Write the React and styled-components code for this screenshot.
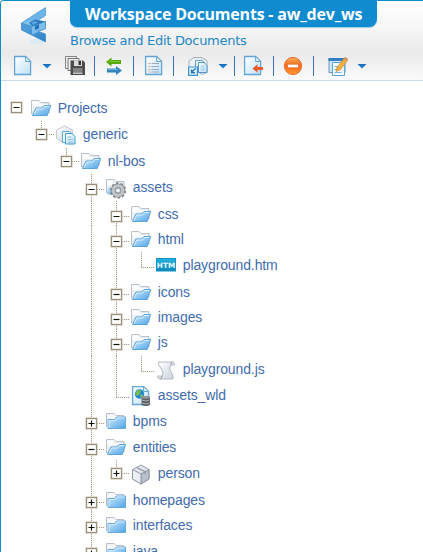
import React from 'react';
import styled, { createGlobalStyle } from 'styled-components';

const GlobalStyle = createGlobalStyle`
  * { box-sizing: border-box; }
  body { margin: 0; background: #fff; overflow: hidden; }
`;

const Window = styled.div`
  width: 423px;
  height: 552px;
  overflow: hidden;
  background: #fff;
  border-left: 1px solid #108bd0;
  border-top: 1px solid #108bd0;
  border-top-left-radius: 4px;
`;

const Header = styled.header`
  height: 80px;
  display: flex;
  flex-direction: column;
  border-bottom: 1px solid #cdd9ea;
  background: linear-gradient(#fff 0, #f8f8f8 22px, #eaeaea 51px, #ececec 56px, #fbfbfb 79px);
`;

const Banner = styled.div`
  display: flex;
  height: 53px;
`;

const LogoSlot = styled.div`
  width: 69px;
  padding: 4px 0 0 18px;
`;

const Title = styled.h1`
  margin: -1px 0 0;
  width: 307px;
  height: 27px;
  padding: 0 0 0 15px;
  border-radius: 0 0 8px 7px;
  background: #108bd0;
  box-shadow: 0 1px 1px #9cc9e6;
  color: #fff;
  font: bold 16px/28px 'Open Sans', sans-serif;
  letter-spacing: -0.2px;
  white-space: nowrap;
`;

const Subtitle = styled.div`
  color: #1b87c6;
  font: 13px/20px 'DejaVu Sans', sans-serif;
  letter-spacing: -0.28px;
  padding-top: 4px;
  white-space: nowrap;
`;

const Toolbar = styled.div`
  display: flex;
  height: 23px;
  align-items: center;
`;

const Tool = styled.button`
  display: flex;
  padding: 0;
  border: 0;
  background: none;
  width: 20px;
  height: 22px;
  margin-left: ${(p) => p.$gap}px;
`;

const Caret = styled.span`
  width: 10px;
  height: 5px;
  margin-top: 1px;
  background: linear-gradient(#1669bc, #2b94e4);
  clip-path: polygon(0 0, 100% 0, 50% 100%);
  margin-left: ${(p) => p.$gap}px;
`;

const Separator = styled.span`
  width: 1px;
  height: 20px;
  background: #3972b3;
  margin-left: ${(p) => p.$gap}px;
`;

const Tree = styled.div`
  padding: 14px 0 0 3px;
`;

const Row = styled.div`
  display: flex;
  height: ${(p) => p.$height}px;
`;

const dots = 'repeating-linear-gradient(to bottom, #a9a18e 0 1px, #ece9e2 1px 2px)';
const dashes = 'repeating-linear-gradient(to right, #a9a18e 0 1px, #ece9e2 1px 2px)';

/* One 25px indentation column; $line draws the vertical guide at its centre. */
const Guide = styled.span`
  flex: none;
  width: 25px;
  background: ${(p) => (p.$line ? `${dots} 12px 0 / 1px 100% no-repeat` : 'none')};
`;

const Branch = styled.span`
  flex: none;
  display: flex;
  align-items: flex-start;
  width: 27px;
  height: 100%;
  padding-left: 7px;
  padding-top: ${(p) => p.$axis - 5}px;
  background:
    ${(p) => (p.$stem ? `${dots} 12px 0 / 1px ${p.$through ? '100%' : `${p.$axis}px`} no-repeat` : 'none')},
    ${(p) => (p.$stem ? `${dashes} 12px ${p.$axis}px / 14px 1px no-repeat` : 'none')};
`;

const Toggle = styled.button`
  display: flex;
  width: 11px;
  height: 11px;
  padding: 0;
  border: 1px solid #989078;
  background: #fff;
  box-shadow: 0 0 0 0.6px #cdc8ba, inset 0 0 0 0.5px #e4e0d6;
`;

const Label = styled.span`
  color: #426cae;
  font: 14px/20px 'Liberation Sans', sans-serif;
  letter-spacing: -0.12px;
  margin-left: 6.8px;
  padding-top: 3px;
  white-space: nowrap;
`;

const IconSlot = styled.span`
  display: flex;
  width: 20px;
  height: 22px;
  margin-top: 4px;
`;

const HiddenDefs = styled.svg`
  position: absolute;
`;

const Svg = ({ children }) => (
  <svg width="20" height="22" viewBox="0 0 20 22" fill="none">{children}</svg>
);

const Defs = () => (
  <HiddenDefs width="0" height="0">
    <defs>
      <linearGradient id="blue" x1="0" y1="0" x2="1" y2="1">
        <stop stopColor="#d0ebfd" /><stop offset="1" stopColor="#4fa4e6" />
      </linearGradient>
      <linearGradient id="paper" x1="0" y1="0" x2="1" y2="1">
        <stop stopColor="#fff" /><stop offset="1" stopColor="#bfe0f8" />
      </linearGradient>
      <linearGradient id="grey" x1="0" y1="0" x2="1" y2="1">
        <stop stopColor="#fff" /><stop offset="1" stopColor="#c9d2dd" />
      </linearGradient>
      <linearGradient id="orange" x1="0" y1="0" x2="0" y2="1">
        <stop stopColor="#ffad54" /><stop offset=".5" stopColor="#f36a1d" /><stop offset="1" stopColor="#ff9a35" />
      </linearGradient>
      <linearGradient id="ribbon" x1="0" y1="0" x2="1" y2="1">
        <stop stopColor="#4e9fdb" /><stop offset="1" stopColor="#2f80c4" />
      </linearGradient>
      <linearGradient id="htm" x1="0" y1="0" x2="0" y2="1">
        <stop stopColor="#27b3e0" /><stop offset="1" stopColor="#0c86b8" />
      </linearGradient>
    </defs>
  </HiddenDefs>
);

const Logo = () => (
  <svg width="30" height="42" viewBox="0 0 30 42">
    <ellipse cx="18" cy="36.5" rx="8" ry="2.5" fill="#dceaf4" />
    <path d="M2.500 18L26.500 2.500v8L11 20.500l-8.500 4z" fill="#70b5e8" />
    <path d="M2.500 18l9-2.500 15 1v7l-7 1.500-8 3.500z" fill="#82c2ee" />
    <path d="M2.500 18l10.500 3.500v8L2.500 25z" fill="#4c9bd8" />
    <path d="M2.500 25l10.500-1 13.500 5v8z" fill="url(#ribbon)" />
    <path d="M10 17.500l6.500-3 10 2v5l-13 2.500v-2.500z" fill="#2878be" />
    <path d="M13 21.500l13.500-5v7.500L13 29.500z" fill="#7fbdea" />
    <path d="M12 17.500l4-1.500 3 1.500-5 2.500z" fill="#5aa5de" />
    <path d="M16 20.500l4-1.500v4.500l-4 1.500z" fill="#2474ba" />
    <path d="M26.500 2.500L2.500 18v7l24 12v-8l-8-3 8-2v-7.500L13 21.500 2.500 18M26.500 2.500v8L17 16.500" fill="none" stroke="#438fc9" strokeWidth=".7" />
  </svg>
);

const Page = ({ x = 1, y = 1, w = 17, h = 19 }) => (
  <>
    <path d={`M${x + 0.6} ${y + 0.5}h${w - 6}l5 5v${h - 6}h-${w - 1}z`} fill="url(#paper)" stroke="#64a5d7" strokeWidth="1.3" />
    <path d={`M${x + w - 5.4} ${y + 0.5}v5h5z`} fill="#e6f5ff" stroke="#64a5d7" />
  </>
);

const NewIcon = () => <Svg><Page /></Svg>;

const SaveAllIcon = () => (
  <Svg>
    <path d="M.5 1.500h11v12H.5z" fill="#eee" stroke="#858585" />
    <path d="M3 3.500h11v12H3z" fill="#eee" stroke="#777" />
    <path d="M5.500 5.500h12.500l2 2v12.500H5.500z" fill="#4b4b4b" />
    <path d="M9 5.500h8v5.500H9z" fill="#dedede" />
    <path d="M13.500 6h2.500v4h-2.500z" fill="#333" />
    <path d="M8 13h9.500v4.500H8z" fill="#838383" />
    <path d="M8 17.500h9.500v1.500H8z" fill="#c5c5c5" />
  </Svg>
);

const SwapIcon = () => (
  <Svg>
    <path d="M2 7l5.500-4.500V5H17v4H7.500v2.500z" fill="#55a80b" />
    <path d="M4.500 7L7 5.500V6.500h9" stroke="#82c431" />
    <path d="M18 15.500L12 11v2.500H3v4h9V20z" fill="#3485bd" />
    <path d="M4 14.500h10" stroke="#70b1dc" />
  </Svg>
);

const ListIcon = () => (
  <Svg>
    <Page />
    <path d="M7.500 8.500H15M7.500 11.500H15M7.500 14.500H15M7.500 17H15" stroke="#9aabc0" />
    <path d="M4.500 8.500H6.500M4.500 11.500H6.500M4.500 14.500H6.500M4.500 17H6.500" stroke="#e3a07f" strokeWidth="1.2" />
  </Svg>
);

const WorkspaceIcon = () => (
  <Svg>
    <path d="M1 12V6l5-3.500h7l6 3v12l-5 2z" fill="#eef1f4" stroke="#a4b0bb" />
    <path d="M7.500 5.500h7l2 2v9h-9z" fill="url(#paper)" stroke="#5fa3d5" />
    <path d="M10.500 7.500h5.500l3 3v7h-8.500z" fill="url(#paper)" stroke="#4e96ce" />
    <path d="M12.500 11h4M12.500 13h4M12.500 15h4" stroke="#9bc6e6" />
    <path d="M.6 12h8.800v8.400H.6z" fill="#e3f4ff" stroke="#3d92cf" strokeWidth="1.2" />
    <path d="M7.500 13.500L3.500 17.500M3.500 14.500v3.300H7" stroke="#247cc1" strokeWidth="1.5" />
  </Svg>
);

const ImportIcon = () => (
  <Svg>
    <Page />
    <path d="M9.500 13.500l5-4.200v2.800H20v3h-5.500v2.700z" fill="#f05a2b" />
  </Svg>
);

const StopIcon = () => (
  <Svg>
    <circle cx="10" cy="11" r="8.6" fill="url(#orange)" stroke="#ec6a29" />
    <path d="M4.500 9.200h11v3.600h-11z" fill="#fff" stroke="#e85b1b" strokeWidth=".7" />
  </Svg>
);

const EditIcon = () => (
  <Svg>
    <path d="M1 3.500h16v14H1z" fill="#cfe6f8" stroke="#6298c6" />
    <path d="M.5 3h17v3H.5z" fill="#347fc0" />
    <path d="M4.500 7.500h10l2 3v10h-12z" fill="#f5fbff" stroke="#5fa5d6" />
    <path d="M6.500 11.500h5M6.500 14.500h4M6.500 17.500h7" stroke="#79b2dc" />
    <path d="M9 12.500l7.500-9.500 3 2.300L12.500 14.500l-4.500 2z" fill="#f5b244" stroke="#c98a3c" strokeWidth=".8" />
    <path d="M16 4l1.700-2 2.300 1.700-1.500 2z" fill="#d68b55" />
  </Svg>
);

const FolderBack = () => (
  <>
    <path d="M.5 15V1.500H8l2 2h8V14z" fill="url(#grey)" stroke="#bac2cc" />
    <path d="M2 4h6M2 6h15" stroke="#fff" strokeWidth="1.5" />
  </>
);

const OpenFolder = () => (
  <Svg>
    <FolderBack />
    <path d="M1.500 16.500L5 9h6l2-2.500h6.700l-3.500 10z" fill="url(#blue)" stroke="#5ba4da" />
    <path d="M3 15.500L5.800 10h5.700l2-2.500h4.700" stroke="#dcf1ff" />
  </Svg>
);

const ClosedFolder = () => (
  <Svg>
    <path d="M.5 15V1.500H8l2 2h7.500V6" fill="#f4f6f8" stroke="#b7bec8" />
    <path d="M2 16.500v-9h6.500l2-2.500h9v11.500z" fill="url(#blue)" stroke="#68a9de" />
    <path d="M3 15.500V8.500h6l2-2.500h7.500" stroke="#d5edff" />
  </Svg>
);

const ProjectIcon = () => (
  <Svg>
    <path d="M.5 5L8.500 .8 16.500 5v9.500L8 18 .5 13.500z" fill="url(#grey)" stroke="#c2ccd7" />
    <path d="M6.500 6.500h7l3 3v8h-10z" fill="#eef8ff" stroke="#60aad8" />
    <path d="M9.500 8.500H16l3 3v7.500H9.500z" fill="url(#paper)" stroke="#3e9bd3" />
    <path d="M11.500 12h4M11.500 14.500h5.500M11.500 17H17" stroke="#82bbdd" />
  </Svg>
);

const GearFolder = () => (
  <Svg>
    <FolderBack />
    <path d="M1.500 9.500h8v7h-8z" fill="url(#blue)" />
    <circle cx="12" cy="12.5" r="7.2" stroke="#84898d" strokeWidth="2" strokeDasharray="2.6 1.924" />
    <circle cx="12" cy="12.5" r="4.8" stroke="#888d91" strokeWidth="4.4" />
    <circle cx="12" cy="12.5" r="4.8" stroke="#c3c6c8" strokeWidth="3" />
    <circle cx="12" cy="12.5" r="2.4" fill="#f3f6f8" stroke="#888d91" strokeWidth=".8" />
  </Svg>
);

const HtmIcon = () => (
  <Svg>
    <rect x=".5" y="2.5" width="19" height="12.5" fill="url(#htm)" stroke="#1191c3" />
    <text x="10" y="12" textAnchor="middle" fontFamily="DejaVu Sans" fontSize="7.3" fontWeight="bold" fill="#e9faff">HTM</text>
  </Svg>
);

const ScriptIcon = () => (
  <Svg>
    <path d="M2.500 2H17q1.500.2 1.500 3H15q-3 2.500 0 7 3 4.500 2 7H4q-2.500 0-2.500-3H6q2.500-3-.5-7-4-5-3-7z" fill="url(#grey)" stroke="#b3bac3" />
    <path d="M15 5q-.5-1.500 1-3M6 16q0 2-2 3" stroke="#929ba5" />
  </Svg>
);

const WorldIcon = () => (
  <Svg>
    <Page y={0} h={19} />
    <circle cx="8.5" cy="8" r="4.7" fill="#2488cd" />
    <path d="M6 4.500l3-.7 1 2-2 3-2 1-2-2zM9 9l2-1 1 2-2 2z" fill="#73bd56" />
    <path d="M10.500 11.500h8.500v7.500q-4.200 2-8.500 0z" fill="#5a5d60" />
    <ellipse cx="14.8" cy="11.5" rx="4.2" ry="1.4" fill="#8f9295" />
    <path d="M11 14q4 2 7.500 0M11 17q4 2 7.500 0" stroke="#b0b3b6" />
  </Svg>
);

const EntityIcon = () => (
  <Svg>
    <path d="M1.500 5.500L10 1l8 4.500v9.500L10 20l-8.500-5z" fill="#e3e6ee" stroke="#979eab" />
    <path d="M10 10l8-4.500V15l-8 5z" fill="#bac0cc" stroke="#8c93a0" />
    <path d="M1.500 5.500L10 10v10l-8.500-5z" fill="#edeff4" stroke="#9299a6" />
    <path d="M5.500 3.500l8.500 4.200v2.500" stroke="#949ba8" strokeWidth="1.3" />
  </Svg>
);

const Sign = ({ plus }) => (
  <svg width="9" height="9" viewBox="0 0 9 9">
    <path d={plus ? 'M1.500 4.500h6M4.500 1.500v6' : 'M1.500 4.500h6'} stroke="#111" strokeWidth="1.2" />
  </svg>
);

/* guides lists, for each ancestor column, whether its vertical line passes the row. */
const rows = [
  { label: 'Projects', icon: OpenFolder, guides: [], height: 26, axis: 12, root: true, sign: '-' },
  { label: 'generic', icon: ProjectIcon, guides: [0], height: 27, axis: 13, sign: '-' },
  { label: 'nl-bos', icon: OpenFolder, guides: [0, 0], height: 26, axis: 13, sign: '-' },
  { label: 'assets', icon: GearFolder, guides: [0, 0, 0], height: 27, axis: 15, sign: '-', through: true },
  { label: 'css', icon: OpenFolder, guides: [0, 0, 0, 1], height: 25, axis: 15, sign: '-', through: true },
  { label: 'html', icon: OpenFolder, guides: [0, 0, 0, 1], height: 26, axis: 15, sign: '-', through: true },
  { label: 'playground.htm', icon: HtmIcon, guides: [0, 0, 0, 1, 1], height: 27, axis: 15 },
  { label: 'icons', icon: OpenFolder, guides: [0, 0, 0, 1], height: 25, axis: 15, sign: '-', through: true },
  { label: 'images', icon: OpenFolder, guides: [0, 0, 0, 1], height: 25, axis: 15, sign: '-', through: true },
  { label: 'js', icon: OpenFolder, guides: [0, 0, 0, 1], height: 27, axis: 15, sign: '-', through: true },
  { label: 'playground.js', icon: ScriptIcon, guides: [0, 0, 0, 1, 1], height: 26, axis: 15 },
  { label: 'assets_wld', icon: WorldIcon, guides: [0, 0, 0, 1], height: 26, axis: 15 },
  { label: 'bpms', icon: ClosedFolder, guides: [0, 0, 0], height: 26, axis: 15, sign: '+', through: true },
  { label: 'entities', icon: OpenFolder, guides: [0, 0, 0], height: 26, axis: 15, sign: '-', through: true },
  { label: 'person', icon: EntityIcon, guides: [0, 0, 0, 1], height: 27, axis: 13, sign: '+' },
  { label: 'homepages', icon: ClosedFolder, guides: [0, 0, 0], height: 25, axis: 15, sign: '+', through: true },
  { label: 'interfaces', icon: ClosedFolder, guides: [0, 0, 0], height: 26, axis: 15, sign: '+', through: true },
  { label: 'java', icon: ClosedFolder, guides: [0, 0, 0], height: 26, axis: 15, sign: '+', through: true },
];

function TreeRow({ label, icon: Icon, guides, height, axis, root, sign, through }) {
  return (
    <Row $height={height}>
      {guides.map((line, i) => <Guide key={i} $line={line} />)}
      <Branch $stem={!root} $through={through} $axis={axis}>
        {sign && <Toggle><Sign plus={sign === '+'} /></Toggle>}
      </Branch>
      <IconSlot><Icon /></IconSlot>
      <Label>{label}</Label>
    </Row>
  );
}

export default function App() {
  return (
    <>
      <GlobalStyle />
      <Defs />
      <Window>
        <Header>
          <Banner>
            <LogoSlot><Logo /></LogoSlot>
            <div>
              <Title>Workspace Documents - aw_dev_ws</Title>
              <Subtitle>Browse and Edit Documents</Subtitle>
            </div>
          </Banner>
          <Toolbar>
            <Tool $gap={12}><NewIcon /></Tool>
            <Caret $gap={9} />
            <Tool $gap={13}><SaveAllIcon /></Tool>
            <Separator $gap={9} />
            <Tool $gap={9}><SwapIcon /></Tool>
            <Separator $gap={9} />
            <Tool $gap={10}><ListIcon /></Tool>
            <Separator $gap={9} />
            <Tool $gap={14}><WorkspaceIcon /></Tool>
            <Caret $gap={10} />
            <Separator $gap={6} />
            <Tool $gap={8}><ImportIcon /></Tool>
            <Separator $gap={10} />
            <Tool $gap={9}><StopIcon /></Tool>
            <Separator $gap={10} />
            <Tool $gap={14}><EditIcon /></Tool>
            <Caret $gap={9} />
          </Toolbar>
        </Header>
        <Tree>
          {rows.map((row) => <TreeRow key={row.label} {...row} />)}
        </Tree>
      </Window>
    </>
  );
}
